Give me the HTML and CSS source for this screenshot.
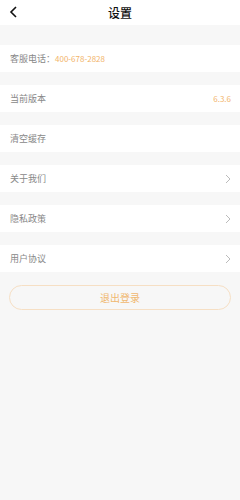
FILE: index.html
```html
<!DOCTYPE html>
<html lang="zh-CN">
<head>
    <meta charset="UTF-8">
    <meta name="viewport" content="width=device-width, initial-scale=1.0">
    <title>设置</title>
    <link rel="stylesheet" href="styles.css">
</head>
<body>

    <div class="header">
        <span class="back">
            <svg width="9" height="12" viewBox="0 0 9 12"><path d="M7 1 L2 6 L7 11" fill="none" stroke="#111" stroke-width="1.6"/></svg>
        </span>
        <h1>设置</h1>
    </div>

    <div class="list">
        <div class="row">
            <span class="label">客服电话：</span>
            <span class="phone">400-678-2828</span>
        </div>
        <div class="row">
            <span class="label">当前版本</span>
            <span class="value">6.3.6</span>
        </div>
        <div class="row">
            <span class="label">清空缓存</span>
        </div>
        <div class="row">
            <span class="label">关于我们</span>
            <svg class="arrow" width="6" height="10" viewBox="0 0 6 10"><path d="M1 1 L5 5 L1 9" fill="none" stroke="#bbb" stroke-width="1"/></svg>
        </div>
        <div class="row">
            <span class="label">隐私政策</span>
            <svg class="arrow" width="6" height="10" viewBox="0 0 6 10"><path d="M1 1 L5 5 L1 9" fill="none" stroke="#bbb" stroke-width="1"/></svg>
        </div>
        <div class="row">
            <span class="label">用户协议</span>
            <svg class="arrow" width="6" height="10" viewBox="0 0 6 10"><path d="M1 1 L5 5 L1 9" fill="none" stroke="#bbb" stroke-width="1"/></svg>
        </div>
    </div>

    <button class="logout">退出登录</button>

</body>
</html>
```

FILE: styles.css
```css
body {
    margin: 0;
    background: #f7f7f7;
    font-family: "Noto Sans CJK SC", "Noto Sans", sans-serif;
    min-height: 500px;
}

.header {
    height: 25px;
    background: #fff;
    display: flex;
    align-items: center;
    justify-content: center;
    position: relative;
}

.header h1 {
    margin: 0;
    font-size: 12px;
    font-weight: 500;
    line-height: 1;
    color: #111;
}

.back {
    position: absolute;
    left: 9px;
    top: 6px;
    display: flex;
}

.list {
    padding-top: 20px;
    display: flex;
    flex-direction: column;
    gap: 13px;
}

.row {
    height: 27px;
    background: #fff;
    display: flex;
    align-items: center;
    padding: 0 9px 0 10px;
}

.label {
    font-size: 9px;
    color: #888;
}

.phone {
    font-size: 8px;
    color: #f2b46a;
}

.value {
    margin-left: auto;
    font-size: 8px;
    color: #f2b46a;
}

.arrow {
    margin-left: auto;
}

.logout {
    display: block;
    box-sizing: border-box;
    width: 222px;
    height: 25px;
    margin: 13px 9px 0;
    background: transparent;
    border: 1px solid #f6dfc4;
    border-radius: 13px;
    font-family: inherit;
    font-size: 10px;
    color: #f0b870;
}
```
